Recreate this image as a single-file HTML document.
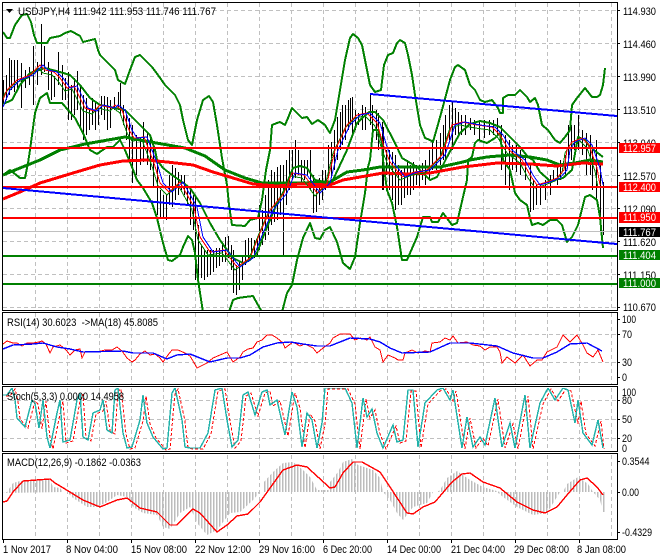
<!DOCTYPE html>
<html><head><meta charset="utf-8"><style>
html,body{margin:0;padding:0;background:#fff;width:660px;height:560px;overflow:hidden}
svg{display:block}
text{font-family:"Liberation Sans",sans-serif;font-size:11px;fill:#000}
.w{fill:#fff}
.g{stroke:#c0c0c0;stroke-width:1;stroke-dasharray:4 3;fill:none}
.bb{fill:none;stroke:#008000;stroke-width:2;stroke-linejoin:round}
polyline{shape-rendering:crispEdges}
</style></head><body>
<svg xmlns="http://www.w3.org/2000/svg" width="660" height="560" viewBox="0 0 660 560">
<defs>
<clipPath id="cm"><rect x="3" y="3" width="614" height="307"/></clipPath>
<clipPath id="cs"><rect x="3" y="388" width="614" height="63"/></clipPath>
<pattern id="hb" width="3" height="10" patternUnits="userSpaceOnUse"><rect x="0" y="0" width="1.5" height="10" fill="#bcbcbc"/></pattern>
</defs>
<rect width="660" height="560" fill="#fff"/>
<!-- grids -->
<path class="g" d="M35.5 3V310M67.5 3V310M99.5 3V310M131.5 3V310M163.5 3V310M195.5 3V310M227.5 3V310M259.5 3V310M291.5 3V310M323.5 3V310M355.5 3V310M387.5 3V310M419.5 3V310M451.5 3V310M483.5 3V310M515.5 3V310M547.5 3V310M579.5 3V310M611.5 3V310"/>
<path class="g" d="M3 10.5H617M3 43.5H617M3 76.5H617M3 109.5H617M3 142.5H617M3 175.5H617M3 208.5H617M3 241.5H617M3 274.5H617M3 307.5H617"/>
<path class="g" d="M35.5 313V384M67.5 313V384M99.5 313V384M131.5 313V384M163.5 313V384M195.5 313V384M227.5 313V384M259.5 313V384M291.5 313V384M323.5 313V384M355.5 313V384M387.5 313V384M419.5 313V384M451.5 313V384M483.5 313V384M515.5 313V384M547.5 313V384M579.5 313V384M611.5 313V384M3 334.5H617M3 362.5H617"/>
<path class="g" d="M35.5 388V451M67.5 388V451M99.5 388V451M131.5 388V451M163.5 388V451M195.5 388V451M227.5 388V451M259.5 388V451M291.5 388V451M323.5 388V451M355.5 388V451M387.5 388V451M419.5 388V451M451.5 388V451M483.5 388V451M515.5 388V451M547.5 388V451M579.5 388V451M611.5 388V451M3 400.5H617M3 419.5H617M3 438.5H617"/>
<path class="g" d="M35.5 455V539M67.5 455V539M99.5 455V539M131.5 455V539M163.5 455V539M195.5 455V539M227.5 455V539M259.5 455V539M291.5 455V539M323.5 455V539M355.5 455V539M387.5 455V539M419.5 455V539M451.5 455V539M483.5 455V539M515.5 455V539M547.5 455V539M579.5 455V539M611.5 455V539"/>

<g clip-path="url(#cm)">
<!-- price bars -->
<path fill="none" stroke="#000" stroke-width="1" shape-rendering="crispEdges" d="M3.5 80V104M6.5 75V100M9.5 58V95M11.5 60V90M14.5 60V92M17.5 60V88M21.5 63V108M25.5 70V88M29.5 67V85M33.5 46V105M37.5 62V85M41.5 24V75M44.5 46V72M48.5 62V90M51.5 70V100M54.5 76V97M58.5 52V85M62.5 65V100M65.5 78V100M68.5 72V120M71.5 85V120M74.5 78V115M77.5 71V110M80.5 85V130M83.5 95V140M86.5 98V135M89.5 108V130M92.5 98V125M95.5 103V130M98.5 108V125M101.5 96V115M104.5 96V120M107.5 97V130M110.5 100V128M114.5 97V110M118.5 92V110M120.5 83V115M123.5 105V125M126.5 115V140M129.5 118V160M132.5 125V183M136.5 135V175M140.5 137V165M143.5 122V162M147.5 133V165M150.5 137V170M153.5 145V187M157.5 160V215M160.5 190V218M163.5 195V218M166.5 195V220M169.5 175V205M172.5 165V207M175.5 168V200M178.5 172V195M181.5 175V190M184.5 175V195M187.5 185V205M190.5 190V225M193.5 195V230M195.5 195V280M198.5 225V280M201.5 245V278M204.5 250V280M207.5 250V277M210.5 250V275M213.5 250V272M216.5 248V268M219.5 248V266M222.5 245V262M225.5 237V262M228.5 236V258M231.5 245V270M233.5 250V293M236.5 265V295M239.5 262V290M242.5 255V280M245.5 240V265M248.5 238V262M251.5 238V258M254.5 240V258M257.5 238V255M259.5 205V250M262.5 210V245M265.5 195V240M268.5 180V235M271.5 170V225M274.5 172V222M277.5 167V220M280.5 165V215M283.5 165V256M286.5 160V205M289.5 150V190M292.5 150V180M295.5 140V178M298.5 150V175M301.5 160V185M304.5 160V180M307.5 160V175M310.5 150V190M313.5 175V213M316.5 185V212M319.5 178V205M322.5 170V200M325.5 170V190M328.5 145V178M331.5 142V178M334.5 130V170M337.5 117V160M340.5 112V150M342.5 105V145M345.5 105V140M348.5 100V130M350.5 98V125M352.5 97V135M355.5 110V130M358.5 113V125M362.5 105V130M365.5 107V130M370.5 93V125M372.5 105V140M376.5 110V140M378.5 113V150M382.5 122V190M383.5 127V190M386.5 150V175M389.5 150V190M392.5 152V200M395.5 155V210M398.5 165V205M401.5 170V205M404.5 167V198M407.5 160V195M410.5 165V195M413.5 162V190M416.5 165V185M419.5 165V187M422.5 163V180M425.5 160V185M429.5 150V180M432.5 140V170M436.5 140V170M440.5 133V165M443.5 125V160M445.5 115V160M449.5 105V140M452.5 102V150M455.5 108V135M458.5 112V135M461.5 115V135M465.5 115V135M470.5 118V130M474.5 120V135M479.5 120V140M484.5 120V138M489.5 120V135M493.5 120V135M497.5 118V135M501.5 125V170M505.5 135V185M509.5 140V190M512.5 145V170M516.5 145V172M520.5 150V175M525.5 155V180M530.5 165V212M533.5 180V210M536.5 185V205M540.5 185V205M545.5 180V200M550.5 175V195M553.5 170V180M557.5 165V185M560.5 160V180M565.5 155V175M568.5 125V165M571.5 125V160M574.5 125V150M578.5 115V150M582.5 130V155M586.5 133V175M590.5 135V175M592.5 150V190M596.5 140V200M600.5 160V232M603.5 182V235"/>
<!-- BB -->
<polyline class="bb" points="3,32 7,38 10,38 15,25 22,15 27,14 31,22 34,35 37,43 47,43 50,38 60,36 65,33 71,31 80,36 83,42 95,39 98,50 100,55 110,65 115,70 118,80 125,84 130,70 135,57 140,55 145,60 152,67 158,75 165,85 175,95 180,105 183,120 188,140 192,145 197,120 203,100 209,96 213,102 217,125 222,158 227,185 229,205 232,225 245,226 250,220 258,218 262,200 266,170 270,150 272,125 277,123 280,122 285,125 288,118 292,108 296,112 302,118 307,117 312,124 318,120 325,125 328,130 330,133 335,120 340,90 345,60 350,38 353,34 358,38 362,45 365,60 370,85 375,92 381,90 384,65 388,55 393,53 397,43 400,40 405,43 408,55 412,75 415,95 420,125 425,138 430,140 433,142 437,128 442,110 450,80 455,67 458,65 465,70 470,85 475,90 480,100 485,102 492,100 498,108 500,113 503,113 503,98 508,95 515,95 520,90 527,97 530,102 535,98 538,105 542,125 548,130 555,140 560,143 565,137 570,130 572,105 577,98 585,88 592,97 597,97 600,95 603,85 605,68"/>
<polyline class="bb" points="3,175 10,170 20,178 25,178 28,163 30,150 35,113 40,98 47,93 50,103 62,103 75,118 83,133 90,150 97,154 107,147 113,147 120,140 125,150 132,167 137,180 143,188 152,203 157,218 163,243 168,260 172,261 180,255 183,247 188,236 192,240 195,253 198,280 203,312"/>
<polyline class="bb" points="229,312 233,300 238,298 245,297 253,296 258,305 262,312"/>
<polyline class="bb" points="282,312 287,293 292,285 297,260 303,238 310,223 315,238 320,239 325,230 330,227 337,242 343,263 350,269 355,257 360,223 365,193 368,167 370,160 373,130 378,130 382,143 383,160 387,190 392,203 397,227 402,260 407,260 417,237 423,217 430,217 432,222 438,222 443,213 452,225 457,223 463,197 467,180 468,160 472,157 475,143 478,140 487,143 495,138 500,133 503,160 510,170 515,193 520,200 527,205 530,218 532,225 538,223 543,225 550,220 557,220 562,225 567,242 572,237 578,225 585,197 590,195 597,200 600,217 603,248"/>
<polyline class="bb" points="3,104 12,100 20,85 30,73 45,68 60,72 70,75 80,85 90,98 100,105 115,108 125,110 135,120 150,135 155,150 157,160 163,168 172,175 182,182 190,188 200,203 210,223 220,240 227,250 233,258 243,263 250,260 257,253 263,237 270,220 277,203 283,193 293,168 300,166 307,168 315,180 325,182 332,182 340,165 347,150 357,123 369,112 375,112 383,120 395,143 402,158 417,167 430,180 437,177 447,157 460,133 470,124 480,121 490,123 500,127 510,137 520,147 528,157 533,160 540,172 550,181 563,178 572,170 578,137 585,140 590,147 603,157"/>
<!-- horizontal levels -->
<path fill="none" stroke="#c0c0c0" d="M3 231.5H617"/>
<!-- slow MAs -->
<polyline fill="none" stroke="#008000" stroke-width="3" stroke-linejoin="round" points="3,175 20,168 40,160 60,150 85,144 125,137 145,141 185,148 205,156 225,170 245,178 262,183 300,183 330,182 347,172 363,170 380,167 417,167 440,167 463,162 470,160 487,157 510,155 530,157 547,160 560,165 575,163 590,160 603,162"/>
<polyline fill="none" stroke="#f00" stroke-width="3" stroke-linejoin="round" points="3,199 20,192 40,183 73,173 100,165 123,161 147,160 167,162 193,165 213,172 233,178 253,184 277,186 300,184 330,185 343,180 383,173 410,174 430,173 463,167 497,163 530,164 557,166 583,163 603,164"/>
<!-- fast MAs -->
<polyline fill="none" stroke="#008000" stroke-width="1" transform="translate(-5,3)" points="3,107 10,90 20,80 33,75 43,65 48,70 57,72 63,78 70,88 77,86 83,98 88,108 97,111 103,105 115,108 118,105 125,110 132,130 137,138 147,137 157,163 163,183 172,192 183,182 197,207 203,237 213,252 227,250 240,267 253,258 263,233 273,210 287,193 295,173 307,175 320,193 330,183 338,150 350,125 360,115 370,113 380,123 387,147 393,162 405,177 417,172 430,170 445,155 455,125 465,122 480,125 495,127 503,135 512,150 525,160 533,175 540,185 550,182 560,178 567,170 570,150 575,142 585,138 592,145 600,168 603,185"/>
<polyline fill="none" stroke="#f00" stroke-width="1" transform="translate(-3,0)" points="3,107 10,90 20,80 33,75 43,65 48,70 57,72 63,78 70,88 77,86 83,98 88,108 97,111 103,105 115,108 118,105 125,110 132,130 137,138 147,137 157,163 163,183 172,192 183,182 197,207 203,237 213,252 227,250 240,267 253,258 263,233 273,210 287,193 295,173 307,175 320,193 330,183 338,150 350,125 360,115 370,113 380,123 387,147 393,162 405,177 417,172 430,170 445,155 455,125 465,122 480,125 495,127 503,135 512,150 525,160 533,175 540,185 550,182 560,178 567,170 570,150 575,142 585,138 592,145 600,168 603,185"/>
<polyline fill="none" stroke="#00f" stroke-width="1" points="3,107 10,90 20,80 33,75 43,65 48,70 57,72 63,78 70,88 77,86 83,98 88,108 97,111 103,105 115,108 118,105 125,110 132,130 137,138 147,137 157,163 163,183 172,192 183,182 197,207 203,237 213,252 227,250 240,267 253,258 263,233 273,210 287,193 295,173 307,175 320,193 330,183 338,150 350,125 360,115 370,113 380,123 387,147 393,162 405,177 417,172 430,170 445,155 455,125 465,122 480,125 495,127 503,135 512,150 525,160 533,175 540,185 550,182 560,178 567,170 570,150 575,142 585,138 592,145 600,168 603,185"/>
<path fill="none" stroke="#f00" stroke-width="2" shape-rendering="crispEdges" d="M3 148H617M3 187H617M3 218H617"/>
<path fill="none" stroke="#008000" stroke-width="2" shape-rendering="crispEdges" d="M3 256H617M3 284H617"/>
<path fill="none" stroke="#00f" stroke-width="2" shape-rendering="crispEdges" d="M3 188L330 218L617 244M370 94L617 116"/>
</g>

<!-- RSI -->
<polyline fill="none" stroke="#f00" stroke-width="1" points="3,344 7,341 13,343 17,343 22,346 27,343 33,343 39,342 42,341 46,344 50,353 53,347 60,345 66,350 70,355 75,350 80,349 82,358 85,352 90,352 97,352 105,350 112,350 117,347 122,351 127,358 132,362 135,360 140,354 145,351 150,355 155,354 160,358 163,362 168,355 172,350 178,350 185,353 190,356 193,361 197,368 207,363 213,358 220,355 227,352 233,362 240,357 243,352 248,349 253,348 257,342 262,340 267,335 272,335 277,338 283,343 285,348 293,342 300,346 305,344 313,348 317,353 323,348 330,343 333,338 340,334 350,334 355,340 360,338 367,340 370,337 375,347 380,350 383,362 388,355 395,358 398,360 403,360 405,353 412,350 418,353 425,351 430,352 432,343 440,342 445,338 450,340 453,336 458,343 467,342 473,345 480,346 485,350 490,347 497,347 500,352 502,363 507,357 515,363 523,355 530,366 537,360 542,360 547,352 557,347 563,335 570,342 577,335 583,345 587,353 593,357 598,350 603,362"/>
<polyline fill="none" stroke="#00f" stroke-width="1.4" points="3,349 13,345 33,344 43,343 57,347 70,349 83,352 123,351 133,353 153,353 167,359 177,355 190,354 210,362 227,358 240,358 250,355 263,347 277,343 290,342 303,344 317,346 330,346 340,342 350,338 370,339 380,342 390,348 402,353 430,352 450,343 470,343 497,346 513,353 533,358 543,358 557,352 570,344 587,343 602,351"/>

<!-- Stoch -->
<g clip-path="url(#cs)">
<polyline fill="none" stroke="#f00" stroke-width="1" stroke-dasharray="3 2" transform="translate(3,1)" points="3,395 7,395 12,388 15,400 17,418 25,427 32,400 35,403 39,428 43,400 47,437 50,448 57,413 60,400 63,442 70,440 77,400 80,393 83,437 88,440 93,413 100,410 103,400 107,430 112,433 115,390 118,388 123,433 127,448 132,447 140,420 143,395 147,423 153,437 163,449 167,448 172,393 175,388 182,420 185,447 190,448 200,448 208,433 215,390 222,388 227,420 232,447 238,440 243,395 248,392 255,415 262,392 267,390 270,405 277,400 285,435 292,392 297,407 302,447 307,413 312,420 317,448 322,423 325,388 330,388 345,388 352,403 357,448 363,398 367,417 372,409 377,433 383,448 393,425 397,442 403,440 408,390 413,390 418,447 425,403 437,390 443,388 450,400 453,390 462,448 467,417 473,447 480,437 485,445 495,398 502,447 510,423 515,448 525,395 530,448 540,403 548,388 555,400 563,388 568,390 575,423 578,400 583,433 592,445 598,420 601,448"/>
<polyline fill="none" stroke="#20b2aa" stroke-width="1.4" points="3,395 7,395 12,388 15,400 17,418 25,427 32,400 35,403 39,428 43,400 47,437 50,448 57,413 60,400 63,442 70,440 77,400 80,393 83,437 88,440 93,413 100,410 103,400 107,430 112,433 115,390 118,388 123,433 127,448 132,447 140,420 143,395 147,423 153,437 163,449 167,448 172,393 175,388 182,420 185,447 190,448 200,448 208,433 215,390 222,388 227,420 232,447 238,440 243,395 248,392 255,415 262,392 267,390 270,405 277,400 285,435 292,392 297,407 302,447 307,413 312,420 317,448 322,423 325,388 330,388 345,388 352,403 357,448 363,398 367,417 372,409 377,433 383,448 393,425 397,442 403,440 408,390 413,390 418,447 425,403 437,390 443,388 450,400 453,390 462,448 467,417 473,447 480,437 485,445 495,398 502,447 510,423 515,448 525,395 530,448 540,403 548,388 555,400 563,388 568,390 575,423 578,400 583,433 592,445 598,420 603,448"/>
</g>

<!-- MACD histogram -->
<g fill="url(#hb)">
<polygon points="3,493 7,492 13,483 20,481 50,480 53,487 60,488 63,492"/>
<polygon points="263,492 263,483 273,472 283,463 293,462 303,470 310,477 317,490 330,490 330,482 338,472 343,462 352,459 358,465 373,470 380,478 383,492"/>
<polygon points="437,492 440,490 447,478 457,471 470,480 483,487 500,492"/>
<polygon points="563,492 567,484 578,477 588,484 593,492"/>
<polygon points="67,492 73,498 87,507 97,507 107,502 117,495 127,497 133,507 143,513 157,515 163,527 170,529 180,513 190,507 197,523 207,535 217,530 230,513 240,512 253,500 260,492"/>
<polygon points="383,492 390,500 397,513 403,520 413,507 427,503 433,492"/>
<polygon points="497,492 503,497 517,507 533,515 547,513 560,492"/>
<polygon points="593,492 600,500 603,512 605,512 605,492"/>
</g>
<polyline fill="none" stroke="#f00" stroke-width="1.4" points="3,502 7,501 13,492 23,481 50,479 55,483 65,489 83,500 100,507 117,500 127,498 140,508 157,512 170,525 177,525 193,509 200,513 217,532 227,525 237,516 248,514 260,502 283,470 297,465 307,467 330,488 335,487 343,473 353,462 362,462 380,472 390,487 407,513 413,514 423,507 435,502 452,482 462,474 470,473 483,482 500,488 517,502 533,510 545,513 557,507 567,495 580,480 587,478 597,487 603,495"/>

<!-- frames -->
<g fill="none" stroke="#000" stroke-width="1" shape-rendering="crispEdges">
<rect x="2.5" y="2.5" width="615" height="308"/>
<rect x="2.5" y="312.5" width="615" height="72"/>
<rect x="2.5" y="386.5" width="615" height="65"/>
<rect x="2.5" y="453.5" width="615" height="86"/>
<path d="M617 10.5h3M617 43.5h3M617 76.5h3M617 109.5h3M617 142.5h3M617 175.5h3M617 208.5h3M617 241.5h3M617 274.5h3M617 307.5h3M617 319.5h3M617 334.5h3M617 362.5h3M617 377.5h3M617 400.5h3M617 419.5h3M617 438.5h3M617 461.5h3M617 492.5h3M617 532.5h3M3.5 540v3M67.5 540v3M131.5 540v3M195.5 540v3M259.5 540v3M323.5 540v3M387.5 540v3M451.5 540v3M515.5 540v3M579.5 540v3"/>
</g>

<!-- title -->
<polygon points="6,9 13,9 9.5,13" fill="#000"/>
<text x="18" y="15" textLength="198" lengthAdjust="spacingAndGlyphs">USDJPY,H4  111.942 111.953 111.746 111.767</text>
<text x="7" y="326" textLength="151" lengthAdjust="spacingAndGlyphs" xml:space="preserve">RSI(14) 30.6023  -&gt;MA(18) 45.8085</text>
<text x="7" y="400" textLength="117" lengthAdjust="spacingAndGlyphs">Stoch(5,3,3) 0.0000 14.4958</text>
<text x="7" y="466" textLength="134" lengthAdjust="spacingAndGlyphs">MACD(12,26,9) -0.1862 -0.0363</text>

<!-- right axis -->
<text x="623" y="15" textLength="33" lengthAdjust="spacingAndGlyphs">114.930</text>
<text x="623" y="48" textLength="33" lengthAdjust="spacingAndGlyphs">114.460</text>
<text x="623" y="81" textLength="33" lengthAdjust="spacingAndGlyphs">113.990</text>
<text x="623" y="114" textLength="33" lengthAdjust="spacingAndGlyphs">113.510</text>
<text x="623" y="147" textLength="33" lengthAdjust="spacingAndGlyphs">113.040</text>
<text x="623" y="180" textLength="33" lengthAdjust="spacingAndGlyphs">112.570</text>
<text x="623" y="213" textLength="33" lengthAdjust="spacingAndGlyphs">112.090</text>
<text x="623" y="246" textLength="33" lengthAdjust="spacingAndGlyphs">111.620</text>
<text x="623" y="279" textLength="33" lengthAdjust="spacingAndGlyphs">111.150</text>
<text x="623" y="311" textLength="33" lengthAdjust="spacingAndGlyphs">110.670</text>
<text x="622" y="323" textLength="14" lengthAdjust="spacingAndGlyphs">100</text>
<text x="622" y="338" textLength="10" lengthAdjust="spacingAndGlyphs">70</text>
<text x="622" y="366" textLength="10" lengthAdjust="spacingAndGlyphs">30</text>
<text x="622" y="381" textLength="5" lengthAdjust="spacingAndGlyphs">0</text>
<text x="622" y="396" textLength="14" lengthAdjust="spacingAndGlyphs">100</text>
<text x="622" y="404" textLength="10" lengthAdjust="spacingAndGlyphs">80</text>
<text x="622" y="423" textLength="10" lengthAdjust="spacingAndGlyphs">50</text>
<text x="622" y="442" textLength="10" lengthAdjust="spacingAndGlyphs">20</text>
<text x="622" y="452" textLength="5" lengthAdjust="spacingAndGlyphs">0</text>
<text x="622" y="465" textLength="27.5" lengthAdjust="spacingAndGlyphs">0.3544</text>
<text x="622" y="496" textLength="17" lengthAdjust="spacingAndGlyphs">0.00</text>
<text x="622" y="536" textLength="30" lengthAdjust="spacingAndGlyphs">-0.4329</text>
<!-- price tags -->
<rect x="619" y="143" width="41" height="10" fill="#f00"/><text class="w" x="623" y="152" textLength="33" lengthAdjust="spacingAndGlyphs">112.957</text>
<rect x="619" y="182" width="41" height="10" fill="#f00"/><text class="w" x="623" y="191" textLength="33" lengthAdjust="spacingAndGlyphs">112.400</text>
<rect x="619" y="212" width="41" height="11" fill="#f00"/><text class="w" x="623" y="221" textLength="33" lengthAdjust="spacingAndGlyphs">111.950</text>
<rect x="619" y="227" width="41" height="10" fill="#000"/><text class="w" x="623" y="236" textLength="33" lengthAdjust="spacingAndGlyphs">111.767</text>
<rect x="619" y="250" width="41" height="10" fill="#008000"/><text class="w" x="623" y="259" textLength="33" lengthAdjust="spacingAndGlyphs">111.404</text>
<rect x="619" y="278" width="41" height="10" fill="#008000"/><text class="w" x="623" y="287" textLength="33" lengthAdjust="spacingAndGlyphs">111.000</text>
<!-- time axis -->
<text x="3" y="553" textLength="48" lengthAdjust="spacingAndGlyphs">1 Nov 2017</text>
<text x="66" y="553" textLength="52" lengthAdjust="spacingAndGlyphs">8 Nov 04:00</text>
<text x="131" y="553" textLength="56" lengthAdjust="spacingAndGlyphs">15 Nov 08:00</text>
<text x="195" y="553" textLength="56" lengthAdjust="spacingAndGlyphs">22 Nov 12:00</text>
<text x="259" y="553" textLength="56" lengthAdjust="spacingAndGlyphs">29 Nov 16:00</text>
<text x="323" y="553" textLength="49" lengthAdjust="spacingAndGlyphs">6 Dec 20:00</text>
<text x="387" y="553" textLength="54" lengthAdjust="spacingAndGlyphs">14 Dec 00:00</text>
<text x="451" y="553" textLength="54" lengthAdjust="spacingAndGlyphs">21 Dec 04:00</text>
<text x="514" y="553" textLength="55" lengthAdjust="spacingAndGlyphs">29 Dec 08:00</text>
<text x="577" y="553" textLength="49" lengthAdjust="spacingAndGlyphs">8 Jan 08:00</text>
</svg>
</body></html>
